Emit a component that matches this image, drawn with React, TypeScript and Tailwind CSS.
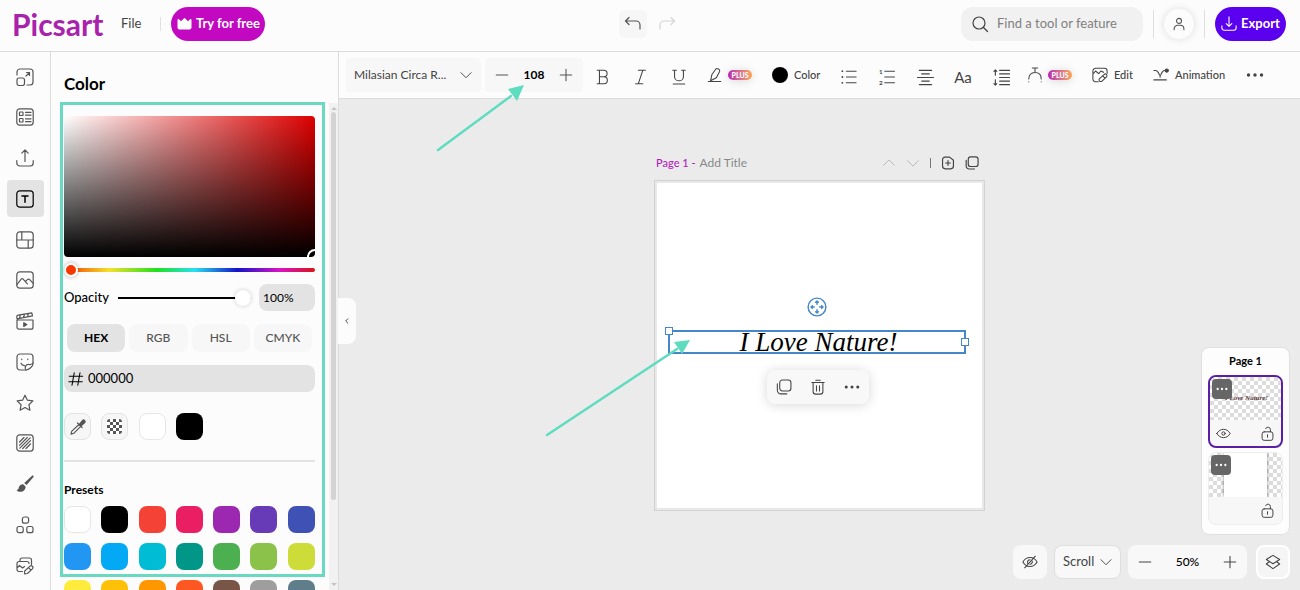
import { useState } from "react";
import type { ReactNode } from "react";
import clsx from "clsx";

type IconProps = { children: ReactNode; size?: number; className?: string; stroke?: number };

function Icon({ children, size = 18, className, stroke = 1.2 }: IconProps) {
  return (
    <svg
      width={size}
      height={size}
      viewBox="0 0 18 18"
      fill="none"
      stroke="currentColor"
      strokeWidth={stroke}
      strokeLinecap="round"
      strokeLinejoin="round"
      className={clsx("shrink-0", className)}
      aria-hidden="true"
    >
      {children}
    </svg>
  );
}

const dots = (
  <g fill="currentColor" stroke="none">
    <circle cx="2.5" cy="9" r="1.7" />
    <circle cx="9" cy="9" r="1.7" />
    <circle cx="15.5" cy="9" r="1.7" />
  </g>
);
const chevronDown = <path d="M2.5 6L9 12.5 15.5 6" />;
const minus = <path d="M2.5 9h13" />;
const plus = <path d="M9 2.5v13M2.5 9h13" />;
const copy = (
  <>
    <rect x="4.2" y="1.2" width="12.6" height="12.3" rx="3" />
    <path d="M1.5 5.5v7.2a4 4 0 0 0 4 4h6.7" />
  </>
);
const lock = (
  <>
    <rect x="2.5" y="7" width="13" height="10.2" rx="2.5" />
    <path d="M12.5 7V4.3a3 3 0 0 0-5.8-1M9 10.5v3" />
  </>
);

const tools = [
  {
    label: "Resize",
    icon: (
      <>
        <path d="M1 7V4a3 3 0 0 1 3-3h10a3 3 0 0 1 3 3v10a3 3 0 0 1-3 3h-3" />
        <rect x="1" y="10" width="7.5" height="7.5" rx="2" />
        <path d="M10 8l3.5-3.5M10.5 4.5h3v3" />
      </>
    ),
  },
  {
    label: "Templates",
    icon: (
      <>
        <rect x="0.8" y="0.8" width="16.4" height="16.4" rx="3" />
        <rect x="3.5" y="4" width="3.5" height="3.5" rx="0.6" />
        <rect x="3.5" y="10.5" width="3.5" height="3.5" rx="0.6" />
        <path d="M9.5 4.3H15M9.5 7.2H15M9.5 10.8H15M9.5 13.7H15" />
      </>
    ),
  },
  {
    label: "Uploads",
    icon: <path d="M9 12.5V1.2M5.8 4.2L9 1l3.2 3.2M.8 11.5V14a3 3 0 0 0 3 3h10.4a3 3 0 0 0 3-3v-2.5" />,
  },
  {
    label: "Text",
    icon: (
      <>
        <rect x="0.8" y="0.8" width="16.4" height="16.4" rx="3" />
        <path d="M6 6h6M9 6v6.2" strokeWidth="1.5" />
      </>
    ),
  },
  {
    label: "Layouts",
    icon: (
      <>
        <rect x="0.8" y="0.8" width="16.4" height="16.4" rx="3" />
        <path d="M.8 9h16.4M5.8 1v8M12.2 9v8" />
      </>
    ),
  },
  {
    label: "Photos",
    icon: (
      <>
        <rect x="0.8" y="0.8" width="16.4" height="16.4" rx="3" />
        <path d="M1 13.5l4.4-5.6a1 1 0 0 1 1.5 0l4.5 5M9.3 10.6l2-2a1.6 1.6 0 0 1 2.4 0l3.3 3.6" />
      </>
    ),
  },
  {
    label: "Videos",
    icon: (
      <>
        <path d="M1 8h16v7.2a2 2 0 0 1-2 2H3a2 2 0 0 1-2-2zM1 6.8l-.2-2.2a1.5 1.5 0 0 1 1.3-1.4L15.8.9l.7 3L1 6.8M4.5 3l-1 3M8.5 2.3l-1 3M12.5 1.6l-1 3" />
        <path d="M7.8 10.7v3.8l3-1.9z" fill="currentColor" />
      </>
    ),
  },
  {
    label: "Stickers",
    icon: (
      <>
        <path d="M10 17H4a3 3 0 0 1-3-3V4a3 3 0 0 1 3-3h10a3 3 0 0 1 3 3v7c0 2-4 6-7 6z" />
        <path d="M10 17c-2-2.500 0-6 3-5.500 1.500.2 3-.2 4-1.500M5 10.200c.6 1.500 1.700 2.300 3.500 2.400M5.800 6v.6M11.800 6v.6" />
      </>
    ),
  },
  {
    label: "Favorites",
    icon: <path d="M9 1.2l2.4 5 5.5.7-4 3.8 1 5.5L9 13.5l-4.900 2.700 1-5.500-4-3.800 5.500-.7z" />,
  },
  {
    label: "Background",
    icon: (
      <>
        <rect x="0.8" y="0.8" width="16.4" height="16.4" rx="3" />
        <path d="M3.5 8L8 3.5M3.5 11.3l7.8-7.8M3.8 14.2L14.2 3.8M6.7 14.5l7.8-7.8M10 14.5l4.5-4.5" />
      </>
    ),
  },
  {
    label: "Draw",
    icon: (
      <g fill="currentColor" stroke="none">
        <path d="M17.3.8c.5.5.4 1 0 1.5L10.6 10 8.2 8 15.8.9c.5-.5 1-.5 1.5-.1z" />
        <path d="M7.2 9.2l2.3 2.2c.5 3-2.4 5.3-5 5.4-1.8.1-3.2-.7-4-1.9 1.4.1 1.9-.6 2.2-2.1.4-2.2 2.1-3.7 4.5-3.6z" />
      </g>
    ),
  },
  {
    label: "Elements",
    icon: (
      <>
        <rect x="6.4" y="1" width="6.2" height="6.2" rx="2" />
        <rect x="1" y="10.5" width="6.2" height="6.2" rx="2" />
        <rect x="10.8" y="10.5" width="6.2" height="6.2" rx="2" />
      </>
    ),
  },
  {
    label: "Batch",
    icon: (
      <>
        <path d="M4 4V3a2 2 0 0 1 2-2h7.5a2 2 0 0 1 2 2v4.5M6.5 14.5H3a2 2 0 0 1-2-2v-6a2 2 0 0 1 2-2h8a2 2 0 0 1 2 2M1 11l2.5-2.5 3 2.5 2-1.5" />
        <path d="M8.5 16.8l.2-2.8 5-4.6a1.8 1.8 0 0 1 2.7 2.5l-5 4.6zM12.5 10.7l2.5 2.5" />
      </>
    ),
  },
];

const presets = [
  ["White", "border border-[#e6e6e6] bg-white"],
  ["Black", "bg-black"],
  ["Red", "bg-[#f44336]"],
  ["Pink", "bg-[#e91e63]"],
  ["Purple", "bg-[#9c27b0]"],
  ["Deep purple", "bg-[#673ab7]"],
  ["Indigo", "bg-[#3f51b5]"],
  ["Blue", "bg-[#2196f3]"],
  ["Light blue", "bg-[#03a9f4]"],
  ["Cyan", "bg-[#00bcd4]"],
  ["Teal", "bg-[#009688]"],
  ["Green", "bg-[#4caf50]"],
  ["Light green", "bg-[#8bc34a]"],
  ["Lime", "bg-[#cddc39]"],
  ["Yellow", "bg-[#ffeb3b]"],
  ["Amber", "bg-[#ffc107]"],
  ["Orange", "bg-[#ff9800]"],
  ["Deep orange", "bg-[#ff5722]"],
  ["Brown", "bg-[#795548]"],
  ["Grey", "bg-[#9e9e9e]"],
  ["Blue grey", "bg-[#607d8b]"],
];

function PlusBadge() {
  return (
    <span className="flex h-[10px] w-6 items-center justify-center rounded-full bg-linear-to-r from-[#b820b0] to-[#fba44f] text-[7px] font-black text-white shadow-[0_1px_10px_rgba(0,0,0,0.15)]">
      PLUS
    </span>
  );
}

function Header() {
  return (
    <header className="flex h-[52px] shrink-0 items-start border-b border-[#dcdcdc] bg-[#fcfcfc] pt-[7px]">
      <div className="flex h-[34px] flex-1 items-center">
        <a href="#home" className="w-[109px] pl-3 text-[30px] leading-8 font-bold text-[#a922ab]">
          Picsart
        </a>
        <button className="px-3 text-[13px] text-[#444]">File</button>
        <span className="mx-[7px] h-[14px] w-px bg-[#e2e2e2]" />
        <button className="ml-[3px] flex h-[34px] w-[94px] items-center justify-center gap-1 rounded-full bg-[#c209c1] text-[13px] font-bold whitespace-nowrap text-white">
          <svg width="15" height="12" viewBox="0 0 15 12" fill="currentColor" aria-hidden="true">
            <path d="M.5 2c0-1 1-1.300 1.700-.6L4 3.200 6.500.7c.6-.6 1.400-.6 2 0L11 3.200l1.800-1.800c.7-.7 1.700-.4 1.700.6v7.500a2 2 0 0 1-2 2h-10a2 2 0 0 1-2-2z" />
          </svg>
          Try for free
        </button>
      </div>
      <div className="ml-[14px] flex h-[34px] items-center gap-[6px] text-[#555]">
        <button aria-label="Undo" className="flex size-7 items-center justify-center rounded-md bg-[#f6f6f6]">
          <Icon>
            <path d="M5 2.5L1.5 6 5 9.5M1.500 6H12a4 4 0 0 1 4 4v4" />
          </Icon>
        </button>
        <button aria-label="Redo" className="flex size-7 items-center justify-center text-[#d5d5d5]">
          <Icon>
            <path d="M13 2.500L16.500 6 13 9.500M16.500 6H6a4 4 0 0 0-4 4v4" />
          </Icon>
        </button>
      </div>
      <div className="flex h-[34px] flex-1 items-center justify-end pr-[14px]">
        <label className="flex h-[34px] w-[182px] items-center gap-2 rounded-xl bg-[#f1f1f1] px-[10px] text-[#444]">
          <Icon>
            <circle cx="8" cy="8" r="6" />
            <path d="M12.5 12.5l4 4" />
          </Icon>
          <input
            type="search"
            aria-label="Find a tool or feature"
            placeholder="Find a tool or feature"
            className="w-full min-w-0 bg-transparent text-[13px] outline-none placeholder:text-[#808080]"
          />
        </label>
        <span className="mx-[10px] h-7 w-px bg-[#dedede]" />
        <button
          aria-label="Account"
          className="flex size-[30px] items-center justify-center rounded-full bg-[#fcfcfc] text-[#555] shadow-[0_0_8px_rgba(0,0,0,0.13)]"
        >
          <Icon size={16}>
            <circle cx="9" cy="5.5" r="2.8" />
            <path d="M3.5 15.500v-1a4 4 0 0 1 4-4h3a4 4 0 0 1 4 4v1" />
          </Icon>
        </button>
        <span className="mx-[10px] h-7 w-px bg-[#dedede]" />
        <button className="flex h-[34px] w-[71px] items-center justify-center gap-1 rounded-full bg-[#5a00ee] text-[13px] font-bold text-white">
          <Icon size={16}>
            <path d="M9 1v10.500M5.800 8.500L9 11.700l3.200-3.200M1 11v2.500A2.500 2.500 0 0 0 3.500 16h11a2.500 2.500 0 0 0 2.500-2.500V11" />
          </Icon>
          Export
        </button>
      </div>
    </header>
  );
}

function ToolRail() {
  return (
    <nav className="flex w-[51px] shrink-0 flex-col items-center justify-between border-r border-[#dcdcdc] pt-[6px] pb-[6px]">
      {tools.map((tool) => (
        <button
          key={tool.label}
          aria-label={tool.label}
          className={clsx(
            "flex h-[37px] w-[37px] items-center justify-center rounded",
            tool.label === "Text" ? "bg-[#e3e3e3] text-black" : "text-[#555]"
          )}
        >
          <Icon>{tool.icon}</Icon>
        </button>
      ))}
    </nav>
  );
}

function ColorPanel() {
  const [mode, setMode] = useState("HEX");
  const [opacity, setOpacity] = useState(100);
  const [hue, setHue] = useState(0);
  const [hex, setHex] = useState("000000");

  return (
    <aside className="relative flex w-[288px] shrink-0 flex-col border-r border-[#dcdcdc]">
      <h2 className="pt-5 pl-[13px] text-[17px] leading-6 font-bold text-black">Color</h2>
      <div className="mt-[7px] flex min-h-0 flex-1">
        <div className="flex flex-1 flex-col overflow-hidden pt-[13px] pr-[14px] pl-[13px]">
          <div className="relative h-[141px] shrink-0 overflow-hidden rounded bg-[linear-gradient(to_top,#000,transparent),linear-gradient(to_right,#fff,#de0000)]">
            <span className="absolute -right-2 -bottom-2 size-4 rounded-full border-2 border-white" />
          </div>
          <input
            type="range"
            aria-label="Hue"
            min={0}
            max={360}
            value={hue}
            onChange={(e) => setHue(Number(e.target.value))}
            className="mt-[11px] h-1 w-full shrink-0 appearance-none rounded-full bg-[linear-gradient(to_right,#f03a00,#f5e02a_18%,#1fe01f_37%,#27e0f0_52%,#1414c8_69%,#d814c4_86%,#d81414)] [&::-webkit-slider-thumb]:size-[14px] [&::-webkit-slider-thumb]:appearance-none [&::-webkit-slider-thumb]:rounded-full [&::-webkit-slider-thumb]:border-2 [&::-webkit-slider-thumb]:border-white [&::-webkit-slider-thumb]:bg-[#f83600] [&::-webkit-slider-thumb]:shadow-[0_0_4px_rgba(0,0,0,0.3)]"
          />
          <div className="mt-3 flex h-[27px] shrink-0 items-center">
            <label htmlFor="opacity" className="w-[54px] text-[13px] font-medium text-black">
              Opacity
            </label>
            <input
              id="opacity"
              type="range"
              value={opacity}
              onChange={(e) => setOpacity(Number(e.target.value))}
              className="mr-2 h-[2px] min-w-0 flex-1 appearance-none bg-black [&::-webkit-slider-thumb]:size-4 [&::-webkit-slider-thumb]:appearance-none [&::-webkit-slider-thumb]:rounded-full [&::-webkit-slider-thumb]:bg-white [&::-webkit-slider-thumb]:shadow-[0_0_4px_rgba(0,0,0,0.2)]"
            />
            <input
              aria-label="Opacity value"
              value={`${opacity}%`}
              readOnly
              className="h-[27px] w-14 rounded-lg bg-[#e3e3e3] pl-1 text-[12px] text-black outline-none"
            />
          </div>
          <div className="mx-[3px] mt-[13px] grid h-7 shrink-0 grid-cols-4 gap-1">
            {["HEX", "RGB", "HSL", "CMYK"].map((m) => (
              <button
                key={m}
                onClick={() => setMode(m)}
                className={clsx(
                  "rounded-lg text-[12px]",
                  m === mode ? "bg-[#e3e3e3] font-bold text-black" : "bg-[#f7f7f7] font-medium text-[#555]"
                )}
              >
                {m}
              </button>
            ))}
          </div>
          <label className="mt-[13px] flex h-[27px] shrink-0 items-center gap-1 rounded-lg bg-[#e3e3e3] px-1 text-black">
            <Icon size={16}>
              <path d="M7 2L4.500 16M13.500 2L11 16M1.500 6h15M1 12h15" />
            </Icon>
            <input
              aria-label="Hex color"
              value={hex}
              onChange={(e) => setHex(e.target.value)}
              className="w-full min-w-0 bg-transparent text-[13px] text-black outline-none"
            />
          </label>
          <div className="mt-[21px] grid shrink-0 grid-cols-7 gap-[10px] text-[#555]">
            <button
              aria-label="Eyedropper"
              className="flex size-[27px] items-center justify-center rounded-lg border border-[#e3e3e3] bg-[#f6f6f6]"
            >
              <Icon>
                <path d="M10 6.500l1.800 1.800L5 15.200l-3 .9.800-3z" />
                <path d="M8.500 5l4.700 4.700M10.800 5.800l2.900-3.500c1-1 3.200.9 2.100 2.200l-3.400 3z" fill="currentColor" />
              </Icon>
            </button>
            <button
              aria-label="Transparent"
              className="flex size-[27px] items-center justify-center rounded-lg border border-[#e3e3e3] bg-[#f6f6f6]"
            >
              <span className="size-[15px] rounded-[3px] bg-[conic-gradient(#fff_25%,#555_0_50%,#fff_0_75%,#555_0)] bg-[size:6px_6px]" />
            </button>
            <button aria-label="Use white" className="size-[27px] rounded-lg border border-[#e6e6e6] bg-white" />
            <button aria-label="Use black" className="size-[27px] rounded-lg bg-black" />
          </div>
          <hr className="mt-5 shrink-0 border-t-2 border-[#e3e3e3]" />
          <h3 className="mt-[18px] shrink-0 text-[12px] leading-5 font-bold text-black">Presets</h3>
          <div className="mt-[6px] grid shrink-0 grid-cols-7 gap-[10px]">
            {presets.map(([name, color]) => (
              <button key={name} aria-label={name} className={clsx("size-[27px] rounded-lg", color)} />
            ))}
          </div>
        </div>
        <div className="flex w-[9px] flex-col items-center justify-between bg-[#f1f1f1] py-1" aria-hidden="true">
          <span className="size-0 border-x-3 border-b-3 border-x-transparent border-b-[#c4c4c4]" />
          <span className="mt-[2px] mb-auto h-[81%] w-[5px] rounded-full bg-[#d3d3d3]" />
          <span className="size-0 border-x-3 border-t-3 border-x-transparent border-t-[#c4c4c4]" />
        </div>
      </div>
      <div className="pointer-events-none absolute top-[50px] bottom-[13px] left-[9px] w-[265px] border-3 border-[#6ad9c2]" />
      <button
        aria-label="Collapse panel"
        className="absolute top-[246px] -right-[18px] z-10 flex h-[46px] w-[18px] items-center justify-center rounded-r-lg bg-[#fcfcfc] text-[#333]"
      >
        <Icon size={8} stroke={2}>
          <path d="M11 4L6 9l5 5" />
        </Icon>
      </button>
    </aside>
  );
}

const toolButton = "flex h-full w-[38px] shrink-0 items-center justify-center";

function TextToolbar() {
  return (
    <div className="flex h-[47px] shrink-0 items-center overflow-hidden border-b border-[#dcdcdc] bg-[#fcfcfc] pl-[7px] text-[11px] font-medium text-[#444]">
      <div className="relative h-[34px] w-[135px] shrink-0">
        <select
          aria-label="Font"
          className="h-full w-full appearance-none rounded bg-[#f7f7f7] pl-2 text-[12px] font-normal text-[#444]"
        >
          <option>Milasian Circa R...</option>
        </select>
        <Icon size={14} className="pointer-events-none absolute top-[10px] right-2">
          {chevronDown}
        </Icon>
      </div>
      <div className="mr-px ml-1 flex h-[34px] w-[98px] shrink-0 items-center justify-between rounded bg-[#f7f7f7] px-[9px] text-[#555]">
        <button aria-label="Decrease size">
          <Icon size={16}>{minus}</Icon>
        </button>
        <input
          aria-label="Font size"
          defaultValue="108"
          className="w-8 bg-transparent text-center text-[12px] font-bold text-black outline-none"
        />
        <button aria-label="Increase size">
          <Icon size={16}>{plus}</Icon>
        </button>
      </div>
      <button aria-label="Bold" className={clsx(toolButton, "pt-1")}>
        <Icon size={16}>
          <path d="M2.5 1.500H10a3.600 3.600 0 0 1 0 7.200H5M10 8.700a3.900 3.900 0 0 1 0 7.800H2.500M5 1.500v15" />
        </Icon>
      </button>
      <button aria-label="Italic" className={clsx(toolButton, "pt-1")}>
        <Icon size={16}>
          <path d="M6 1.500h8M3 16.500h8M11 1.500l-5 15" />
        </Icon>
      </button>
      <button aria-label="Underline" className={clsx(toolButton, "pt-1")}>
        <Icon size={16}>
          <path d="M2 1.500h4M12 1.500h4M4 1.500v6.800a5 5 0 0 0 10 0V1.500M2.500 16.800h13" />
        </Icon>
      </button>
      <button aria-label="Highlight" className="flex h-full w-[66px] shrink-0 items-center gap-[5px] pl-[9px]">
        <Icon size={16}>
          <path d="M4 15.500l1.500-7L10 2.200c1.200-1.500 5.200.8 4.200 2.800l-3.700 7-6.500 3.500M1.500 16.300h14" />
        </Icon>
        <PlusBadge />
      </button>
      <button className="flex h-full w-[66px] shrink-0 items-center gap-[6px] pl-2">
        <span className="size-4 rounded-full bg-black" />
        Color
      </button>
      <button aria-label="Bulleted list" className={clsx(toolButton, "pt-1")}>
        <Icon size={16}>
          <path d="M6 2.500h11M6 9h11M6 15.500h11" />
          <path d="M1.500 2.500h.1M1.500 9h.1M1.500 15.500h.1" strokeWidth="2" />
        </Icon>
      </button>
      <button aria-label="Numbered list" className={clsx(toolButton, "pt-1")}>
        <Icon size={16}>
          <path d="M6.500 2.500h11M6.500 9h11M6.500 15.500h11" />
          <text x="0" y="6" fontSize="7" fontWeight="700" fill="currentColor" stroke="none">1</text>
          <text x="0" y="17.500" fontSize="7" fontWeight="700" fill="currentColor" stroke="none">2</text>
        </Icon>
      </button>
      <button aria-label="Align center" className={clsx(toolButton, "pt-1")}>
        <Icon size={17}>
          <path d="M2.500 1.500h13M5 5.200h8M.5 9h17M5 12.800h8M2.500 16.500h13" />
        </Icon>
      </button>
      <button aria-label="Letter case" className={clsx(toolButton, "pt-1 text-[15px] font-normal")}>
        Aa
      </button>
      <button aria-label="Line spacing" className={clsx(toolButton, "pt-1")}>
        <Icon size={17}>
          <path d="M7 1.500h10.500M7 5.200h10.500M7 9h10.500M7 12.800h10.500M7 16.500h10.500M2.500 1v5.500M1 2.500L2.500 1 4 2.500M2.500 11.500V17M1 15.500L2.500 17 4 15.500" />
        </Icon>
      </button>
      <button aria-label="Curve" className="flex h-full w-[64px] shrink-0 items-center gap-[5px] pl-[7px]">
        <Icon size={16}>
          <path d="M6 1.200h6M9 1.200V6M2 13.500C2 9 4.500 6.200 9 6.200s7 2.800 7 7.300M2 16.500v.2M16 16.500v.2" />
        </Icon>
        <PlusBadge />
      </button>
      <button className="flex h-full w-[60px] shrink-0 items-center gap-[6px] pl-2">
        <Icon size={16}>
          <path d="M7 16.500H4a3 3 0 0 1-3-3v-9a3 3 0 0 1 3-3h10a3 3 0 0 1 3 3V7M1 8l3-3.500 3.500 3 2.500-3 3 1.500M8.500 13l5-4.500a1.900 1.900 0 0 1 2.800 2.600l-5 4.700a1.900 1.900 0 0 1-2.800-2.800zM12 10l2.600 2.600" />
        </Icon>
        Edit
      </button>
      <button className="flex h-full w-[92px] shrink-0 items-center gap-[6px] pl-[9px]">
        <Icon size={16}>
          <path d="M1 4h2c3.500 0 3.500 5.500 5 5.500S9.500 4 13 4M8 9.500v2M1 14.500h14" />
          <circle cx="15.500" cy="4" r="1.800" fill="currentColor" />
        </Icon>
        Animation
      </button>
      <button aria-label="More" className={toolButton}>
        <Icon>{dots}</Icon>
      </button>
    </div>
  );
}

function Artboard() {
  return (
    <section className="mx-auto w-[331px] pt-[54px]" aria-label="Page 1">
      <div className="flex h-5 items-center text-[11px] text-[#888]">
        <span className="pl-[2px] font-medium text-[#b51fc0]">Page 1 -</span>
        <button className="ml-1 text-[12px]">Add Title</button>
        <div className="ml-auto flex items-center gap-[10px] pr-[6px]">
          <button aria-label="Move page up" className="text-[#b5b5b5]">
            <Icon size={14}>
              <path d="M2 12l7-7 7 7" />
            </Icon>
          </button>
          <button aria-label="Move page down" className="text-[#b5b5b5]">
            <Icon size={14}>
              <path d="M2 6l7 7 7-7" />
            </Icon>
          </button>
          <span className="h-[10px] w-px bg-[#777]" />
          <button aria-label="Add page" className="text-[#444]">
            <Icon size={14} stroke={1.5}>
              <path d="M5 1.500h6l5 4V13a3.500 3.500 0 0 1-3.500 3.500h-7A3.500 3.500 0 0 1 2 13V4.500a3 3 0 0 1 3-3zM9 6v6M6 9h6" />
            </Icon>
          </button>
          <button aria-label="Duplicate page" className="text-[#444]">
            <Icon size={14} stroke={1.5}>{copy}</Icon>
          </button>
        </div>
      </div>
      <div className="relative mt-[7px] aspect-square border border-[#d2d2d2] bg-white ring-2 ring-[#e8e8e8] ring-inset">
        <button aria-label="Move text" className="absolute top-[116px] left-[152px] text-[#4587c9]">
          <Icon size={20} stroke={1.3}>
            <circle cx="9" cy="9" r="8" fill="#fff" />
            <path d="M9 3.800v2.700M9 11.500v2.700M3.800 9h2.700M11.500 9h2.700M7.800 4.800L9 3.600l1.200 1.200M7.800 13.200L9 14.400l1.200-1.200M4.800 7.800L3.600 9l1.200 1.200M13.200 7.800L14.400 9l-1.200 1.200" />
          </Icon>
        </button>
        <div className="absolute top-[149px] left-[13px] flex h-6 w-[298px] items-center justify-center border-2 border-[#4587c9] pl-[3px] font-['Liberation_Serif',serif] text-[27px] leading-6 whitespace-nowrap text-black italic">
          I Love Nature!
          <span className="absolute -top-[5px] -left-[5px] size-2 border border-[#4587c9] bg-white" />
          <span className="absolute top-[6px] -right-[5px] size-2 border border-[#4587c9] bg-white" />
        </div>
        <div className="absolute top-[189px] left-[112px] flex h-[34px] w-[102px] items-center justify-around rounded-lg bg-[#f8f8f8] text-[#444] shadow-[0_1px_12px_rgba(0,0,0,0.16)]">
          <button aria-label="Duplicate">
            <Icon size={16}>{copy}</Icon>
          </button>
          <button aria-label="Delete">
            <Icon size={16}>
              <path d="M2 4h14M6.500 1.500h5M3.500 4v10a3 3 0 0 0 3 3h5a3 3 0 0 0 3-3V4M7.300 7.500v6M10.700 7.500v6" />
            </Icon>
          </button>
          <button aria-label="More actions">
            <Icon size={16}>{dots}</Icon>
          </button>
        </div>
        <svg
          width="146"
          height="100"
          viewBox="0 0 146 100"
          className="pointer-events-none absolute top-[157px] -left-[110px]"
          aria-hidden="true"
        >
          <path d="M2 97L132 11" stroke="#5edcc0" strokeWidth="2.500" strokeLinecap="round" />
          <path d="M145 2L129 4l8 12z" fill="#5edcc0" />
        </svg>
      </div>
    </section>
  );
}

const checker = "bg-[conic-gradient(#fff_25%,#dcdcdc_0_50%,#fff_0_75%,#dcdcdc_0)] bg-[size:8px_8px]";

function LayerMenu() {
  return (
    <button
      aria-label="Layer options"
      className="absolute top-[2px] left-[2px] flex size-5 items-center justify-center rounded bg-[#666] text-white"
    >
      <Icon size={12}>{dots}</Icon>
    </button>
  );
}

function LayersPanel() {
  return (
    <div className="w-[89px] rounded-lg border border-[#e0e0e0] bg-[#fdfdfd] px-[6px] pb-[9px] text-[#444]">
      <h3 className="pt-px pb-[3px] text-center text-[11px] leading-[23px] font-bold text-black">Page 1</h3>
      <div className="flex h-[73px] flex-col overflow-hidden rounded-lg border-2 border-[#5c1fa3] bg-[#f7f7f7]">
        <div className={clsx("relative flex h-[43px] items-center justify-center pl-[2px]", checker)}>
          <span className="font-['Liberation_Serif',serif] text-[7px] font-bold text-[#5b3838] italic">
            I Love Nature!
          </span>
          <LayerMenu />
        </div>
        <div className="flex flex-1 items-center justify-between px-[6px]">
          <button aria-label="Hide layer">
            <Icon size={15}>
              <path d="M1 9c2-3.500 5-5 8-5s6 1.500 8 5c-2 3.500-5 5-8 5s-6-1.500-8-5z" />
              <circle cx="9" cy="9" r="2" />
            </Icon>
          </button>
          <button aria-label="Lock layer">
            <Icon size={15}>{lock}</Icon>
          </button>
        </div>
      </div>
      <div className="mt-1 flex h-[73px] flex-col overflow-hidden rounded-lg border border-[#ededed] bg-[#f7f7f7]">
        <div className={clsx("relative flex h-[44px] justify-center overflow-hidden", checker)}>
          <span className="w-[43px] bg-white shadow-[0_0_3px_rgba(0,0,0,0.5)]" />
          <LayerMenu />
        </div>
        <div className="flex flex-1 items-center justify-end px-[7px]">
          <button aria-label="Unlock layer">
            <Icon size={15}>{lock}</Icon>
          </button>
        </div>
      </div>
    </div>
  );
}

function ViewControls() {
  return (
    <div className="flex h-[34px] items-center gap-[7px] text-[13px] text-[#444]">
      <button aria-label="Preview" className="flex size-[34px] items-center justify-center rounded-lg bg-[#f8f8f8]">
        <Icon size={16}>
          <path d="M1 9c2-3.500 5-5 8-5s6 1.500 8 5c-2 3.500-5 5-8 5s-6-1.500-8-5zM15 2.500l-12 13" />
          <path d="M6.500 10.500c-1-2 .5-4 2.500-4M11.500 8c.6 2-1 3.500-2.500 3.500" />
        </Icon>
      </button>
      <div className="relative h-[34px] w-[67px]">
        <select
          aria-label="View mode"
          className="h-full w-full appearance-none rounded-lg border border-[#dedede] bg-[#f8f8f8] pl-2 text-[13px] text-[#444]"
        >
          <option>Scroll</option>
        </select>
        <Icon size={14} className="pointer-events-none absolute top-[10px] right-2">
          {chevronDown}
        </Icon>
      </div>
      <div className="mr-[2px] flex h-[34px] w-[119px] items-center justify-between rounded-lg bg-[#f8f8f8] px-[9px]">
        <button aria-label="Zoom out">
          <Icon size={16}>{minus}</Icon>
        </button>
        <span className="text-[12px] font-medium text-black">50%</span>
        <button aria-label="Zoom in">
          <Icon size={16}>{plus}</Icon>
        </button>
      </div>
      <button
        aria-label="Layers"
        className="flex size-[34px] items-center justify-center rounded-lg border-2 border-white bg-[#f5f5f5]"
      >
        <Icon size={16}>
          <path d="M9 1.500l7.500 4.700L9 11 1.500 6.200zM4.500 9l-3 2.300L9 16.500l7.500-5.200-3-2.300" />
        </Icon>
      </button>
    </div>
  );
}

export default function App() {
  return (
    <div className="flex h-screen flex-col overflow-hidden bg-[#fcfcfc] font-[Lato,'Open_Sans',sans-serif]">
      <Header />
      <div className="flex min-h-0 flex-1">
        <ToolRail />
        <ColorPanel />
        <main className="relative flex min-w-0 flex-1 flex-col bg-[#ebebeb]">
          <TextToolbar />
          <div className="flex-1">
            <Artboard />
          </div>
          <div className="absolute right-[10px] bottom-[11px] flex flex-col items-end gap-[10px]">
            <LayersPanel />
            <ViewControls />
          </div>
          <svg
            width="92"
            height="70"
            viewBox="0 0 92 70"
            className="pointer-events-none absolute top-[31px] left-[96px]"
            aria-hidden="true"
          >
            <path d="M3 67L76 13" stroke="#5edcc0" strokeWidth="2.500" strokeLinecap="round" />
            <path d="M89 2L73 6l9 12z" fill="#5edcc0" />
          </svg>
        </main>
      </div>
    </div>
  );
}
